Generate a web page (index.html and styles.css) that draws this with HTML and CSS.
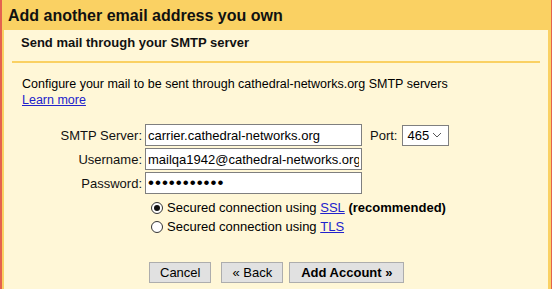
FILE: index.html
```html
<!DOCTYPE html>
<html lang="en">
<head>
  <meta charset="UTF-8">
  <title>Add another email address you own</title>
  <link rel="stylesheet" href="styles.css">
</head>
<body>
  <div class="dialog">
    <div class="dialog-title">Add another email address you own</div>

    <div class="panel">
      <div class="step-title">Send mail through your SMTP server</div>

      <p class="intro">
        Configure your mail to be sent through cathedral-networks.org SMTP servers<br>
        <a href="#">Learn more</a>
      </p>

      <div class="form">
        <label class="field-label">SMTP Server:</label>
        <div class="field-row">
          <input class="text-input" type="text" value="carrier.cathedral-networks.org">
          <span class="port-label">Port:</span>
          <div class="select">
            <span>465</span>
            <svg width="10" height="6" viewBox="0 0 10 6"><path d="M1 1l4 4 4-4" fill="none" stroke="#555" stroke-width="1"/></svg>
          </div>
        </div>

        <label class="field-label">Username:</label>
        <div class="field-row">
          <input class="text-input" type="text" value="mailqa1942@cathedral-networks.org">
        </div>

        <label class="field-label">Password:</label>
        <div class="field-row">
          <input class="text-input password" type="password" value="abcdefghijk">
        </div>
      </div>

      <div class="options">
        <div class="option"><span class="radio on"></span>Secured connection using <a href="#">SSL</a>&nbsp;<b>(recommended)</b></div>
        <div class="option"><span class="radio"></span>Secured connection using <a href="#">TLS</a></div>
      </div>

      <div class="actions">
        <button class="btn">Cancel</button>
        <button class="btn btn-back">&laquo; Back</button>
        <button class="btn btn-main">Add Account &raquo;</button>
      </div>
    </div>
  </div>
</body>
</html>
```

FILE: styles.css
```css
* { box-sizing: border-box; }
html, body {
  margin: 0;
  padding: 0;
  height: 100%;
  background: #fff7d7;
}
body {
  font-family: Arial, "Liberation Sans", sans-serif;
  font-size: 13px;
  color: #000;
  overflow: hidden;
}
a {
  color: #2222cc;
}
.dialog {
  height: 289px;
  background: #fad163;
  border-left: 2px solid #e4614f;
  border-right: 1px solid #e4614f;
  padding: 0 3px 0 2px;
  display: flex;
  flex-direction: column;
}
.dialog-title {
  height: 30px;
  padding: 1px 0 0 4px;
  font-size: 16px;
  font-weight: bold;
  line-height: 29px;
  color: #111;
}
.panel {
  flex: 1;
  background: #fff7d7;
  padding: 0 8px;
}
.step-title {
  border-bottom: 2px solid #fad163;
  padding: 5px 0 10px 9px;
  font-size: 13px;
  font-weight: bold;
  line-height: 16px;
  color: #111;
}
.intro {
  margin: 13px 0 0 10px;
  font-size: 12.5px;
  line-height: 16px;
}
.form {
  display: grid;
  grid-template-columns: 122px auto;
  column-gap: 3px;
  row-gap: 2px;
  margin: 16px 0 0 8px;
  align-items: center;
}
.field-label {
  text-align: right;
  font-size: 13px;
  color: #111;
}
.field-row {
  display: flex;
  align-items: center;
}
.text-input {
  width: 217px;
  height: 22px;
  border: 1px solid #7f7f7f;
  border-radius: 0;
  padding: 0 2px;
  font-family: Arial, "Liberation Sans", sans-serif;
  font-size: 13px;
  color: #000;
  background: #fff;
  outline: none;
}
.text-input.password {
  font-size: 17px;
  letter-spacing: 1px;
}
.port-label {
  margin: 0 5px 0 8px;
  font-size: 13px;
  color: #111;
}
.select {
  width: 47px;
  height: 21px;
  border: 1px solid #7f7f7f;
  background: #fff;
  display: flex;
  align-items: center;
  justify-content: space-between;
  padding: 0 6px 0 4px;
  font-size: 13px;
}
.options {
  margin: 4px 0 0 139px;
}
.option {
  display: flex;
  align-items: center;
  height: 19px;
  font-size: 13px;
  white-space: pre;
}
.radio {
  width: 12px;
  height: 12px;
  border: 1px solid #333;
  border-radius: 50%;
  background: #fff;
  margin-right: 4px;
  display: flex;
  align-items: center;
  justify-content: center;
}
.radio.on::after {
  content: "";
  width: 6px;
  height: 6px;
  border-radius: 50%;
  background: #111;
}
.actions {
  display: flex;
  margin: 26px 0 0 137px;
}
.btn {
  height: 21px;
  padding: 0 10px;
  border: 1px solid #adadad;
  background: #e1e1e1;
  font-family: Arial, "Liberation Sans", sans-serif;
  font-size: 13px;
  color: #000;
  border-radius: 0;
}
.btn-back {
  margin-left: 10px;
}
.btn-main {
  margin-left: 6px;
  font-weight: bold;
  padding: 0 11px;
}
```
